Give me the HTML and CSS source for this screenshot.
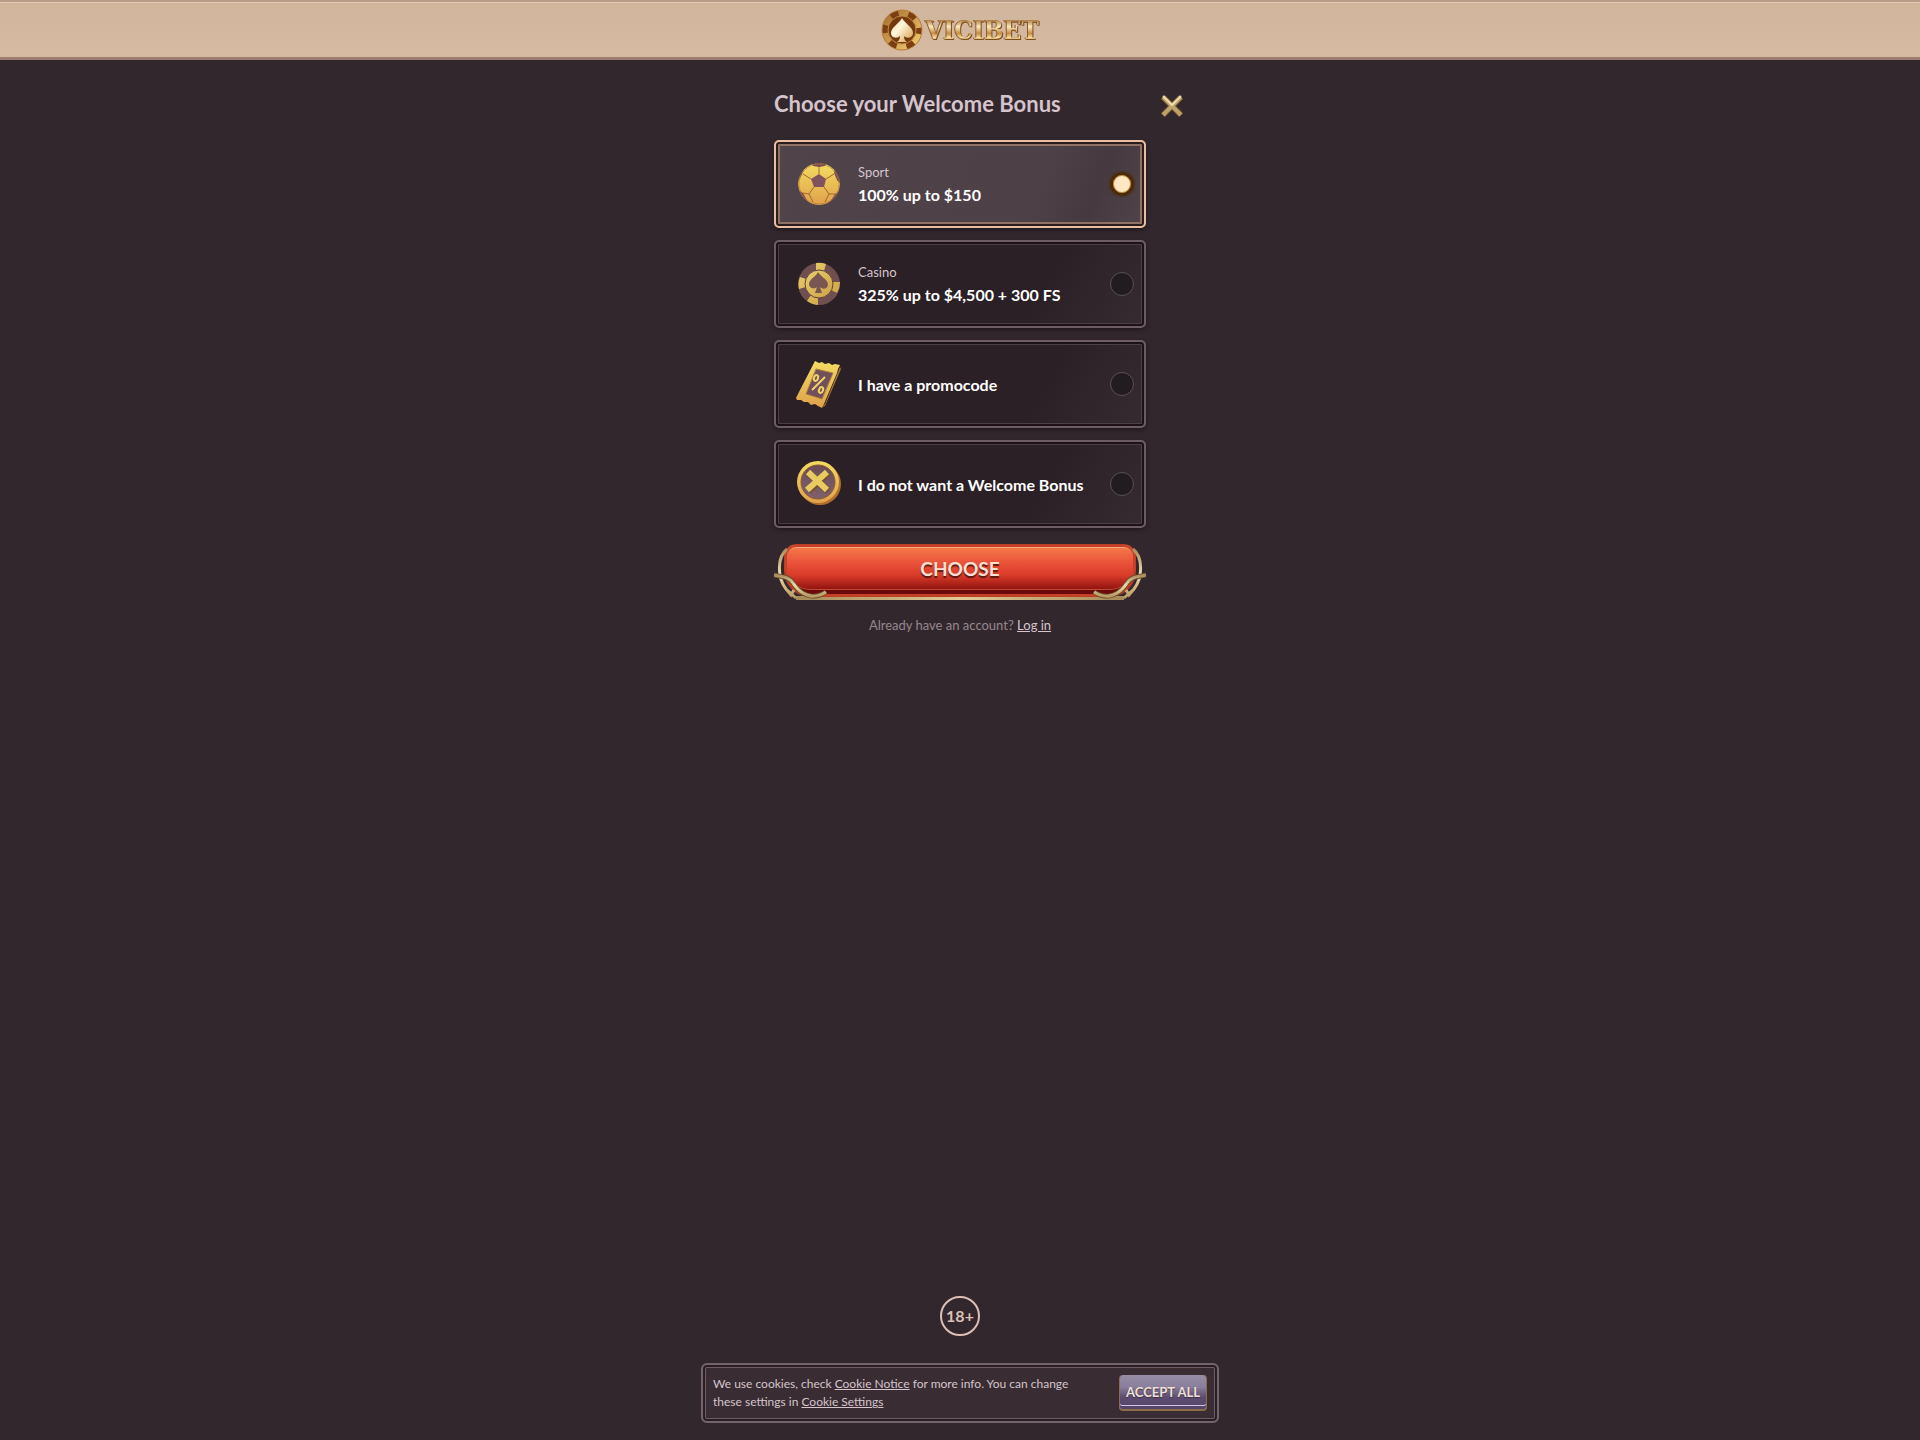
FILE: index.html
```
<!DOCTYPE html>
<html lang="en">

<head>
	<meta charset="utf-8">
	<meta name="viewport" content="width=device-width, initial-scale=1">
	<title>Vicibet - Choose your Welcome Bonus</title>
	<link rel="stylesheet" href="styles.css">
</head>

<body>
	<!-- shared gradients -->
	<svg class="defs" width="0" height="0" aria-hidden="true">
		<defs>
			<linearGradient id="gold" x1="0" y1="0" x2="0" y2="1">
				<stop offset="0" stop-color="#f3dc62" />
				<stop offset="1" stop-color="#e0a04c" />
			</linearGradient>
			<linearGradient id="goldSoft" x1="0" y1="0" x2="1" y2="1">
				<stop offset="0" stop-color="#ead06b" />
				<stop offset="1" stop-color="#caa044" />
			</linearGradient>
			<linearGradient id="plum" x1="0" y1="0" x2="0" y2="1">
				<stop offset="0" stop-color="#6b4c57" />
				<stop offset="1" stop-color="#80606d" />
			</linearGradient>
			<linearGradient id="brass" x1="0" y1="0" x2="0" y2="1">
				<stop offset="0" stop-color="#a78d5e" />
				<stop offset="0.5" stop-color="#ecdcae" />
				<stop offset="1" stop-color="#b99b64" />
			</linearGradient>
			<linearGradient id="rim" x1="0" y1="0" x2="1" y2="1">
				<stop offset="0" stop-color="#a8702f" />
				<stop offset="1" stop-color="#f2cb72" />
			</linearGradient>
			<linearGradient id="cream" x1="0" y1="0" x2="1" y2="1">
				<stop offset="0" stop-color="#f3d9a0" />
				<stop offset="0.4" stop-color="#fff6da" />
				<stop offset="1" stop-color="#d69c4c" />
			</linearGradient>
		</defs>
	</svg>

	<header class="topbar">
		<a class="logo" href="#" aria-label="Vicibet">
			<svg width="42" height="42" viewBox="0 0 42 42" aria-hidden="true">
				<circle cx="21" cy="21" r="20" fill="#7c3f12" />
				<circle cx="21" cy="21" r="17" fill="none" stroke="url(#rim)" stroke-width="6" stroke-dasharray="10 8" stroke-dashoffset="14" />
				<circle cx="21" cy="21" r="20" fill="none" stroke="#b98042" stroke-width="1" />
				<circle cx="21" cy="21" r="14" fill="#75390f" stroke="#c28c44" stroke-width="1" />
				<path d="M21 9c2 5 11 9 11 15 0 5-6 6-9 3 0 3 1 5 3 6H16c2-1 3-3 3-6-3 3-9 2-9-3 0-6 9-10 11-15z" fill="url(#cream)" />
			</svg>
			<span class="logo-text">VICIBET</span>
		</a>
	</header>

	<main class="bonus">
		<div class="bonus-head">
			<h1>Choose your Welcome Bonus</h1>
			<button class="close" type="button" aria-label="Close">
				<svg width="24" height="24" viewBox="0 0 24 24" aria-hidden="true">
					<path d="M3 3L21 21M21 3L3 21" stroke="#6f5530" stroke-width="6" />
					<path d="M3 3L21 21M21 3L3 21" stroke="#bfa267" stroke-width="4" />
					<path d="M3 2L12 11L21 2" fill="none" stroke="#ecdcb0" stroke-width="2" />
				</svg>
			</button>
		</div>

		<form>
			<label class="card">
				<svg class="card-icon" width="44" height="44" viewBox="0 0 44 44" aria-hidden="true">
					<clipPath id="ball"><circle cx="22" cy="22" r="21" /></clipPath>
					<g clip-path="url(#ball)">
						<circle cx="22" cy="22" r="21" fill="url(#gold)" />
						<path d="M22 12l7 5-2 8H17l-3-8z" fill="#80525c" />
						<path d="M14 0h16l-2 4-6 1-6-1zM38 7l6 6v9l-4-4-3-7zM7 7l-7 6v5l5-6zM0 27l6 4 5 9-7 2zM44 28l-6 4-5 8 9 2z" fill="#7d4c52" />
						<path d="M22 12V5M29 17l8-5M27 25l5 7M17 25l-5 7M14 17l-8-5M6 31l6 1 4 8M38 32h-6l-4 8M0 20l5-8M44 22l-4-4" fill="none" stroke="#9b6a2c" stroke-width="1" />
						<circle cx="22" cy="22" r="20" fill="none" stroke="#a9763c" stroke-width="1" opacity="0.6" />
					</g>
				</svg>
				<span class="card-text"><small>Sport</small><b>100% up to $150</b></span>
				<input type="radio" name="bonus" value="sport" checked>
			</label>

			<label class="card">
				<svg class="card-icon" width="44" height="44" viewBox="0 0 44 44" aria-hidden="true">
					<circle cx="22" cy="22" r="21" fill="#714f50" />
					<path d="M19 1A21 21 0 0 1 29 2L27 9H19zM43 20A21 21 0 0 1 40 31L34 28 36 20zM21 43A21 21 0 0 1 10 39L14 33 21 35zM2 27A21 21 0 0 1 3 15L9 17V25z" fill="url(#goldSoft)" />
					<circle cx="22" cy="22" r="14" fill="url(#goldSoft)" stroke="#5e4043" stroke-width="1" />
					<path d="M21 10c3 5 9 7 10 12 0 5-5 6-8 3l2 6h-7l2-6c-3 3-8 1-8-3 0-5 7-7 9-12z" fill="#7a5652" />
				</svg>
				<span class="card-text"><small>Casino</small><b>325% up to $4,500 + 300 FS</b></span>
				<input type="radio" name="bonus" value="casino">
			</label>

			<label class="card">
				<svg class="card-icon" width="46" height="48" viewBox="0 0 46 48" aria-hidden="true">
					<path d="M44 7l-15 37-3 3 3-1 16-37z" fill="#a87430" />
					<path d="M19 1l4 2 3-1 3 2 4-1 3 2 3-1 5 1-2 4-1 4-13 31-2 4-4-2-3-2-4 1-3-3-4 0-3-2-4 0-1-2 4-8z" fill="url(#gold)" />
					<path d="M20 9l17 4-11 26-16-5z" fill="#71505b" stroke="#ad803c" stroke-width="1" />
					<ellipse cx="20" cy="18" rx="2" ry="3" transform="rotate(20 20 18)" fill="none" stroke="#f2d36a" stroke-width="2" />
					<ellipse cx="25" cy="30" rx="2" ry="3" transform="rotate(20 25 30)" fill="none" stroke="#f2d36a" stroke-width="2" />
					<path d="M29 17L16 30" stroke="#f2d36a" stroke-width="2" />
				</svg>
				<span class="card-text"><b>I have a promocode</b></span>
				<input type="radio" name="bonus" value="promocode">
			</label>

			<label class="card">
				<svg class="card-icon" width="46" height="48" viewBox="0 0 46 48" aria-hidden="true">
					<circle cx="24" cy="24" r="21" fill="#b06f2b" />
					<circle cx="22" cy="22" r="21" fill="url(#gold)" />
					<circle cx="22" cy="22" r="17" fill="url(#plum)" stroke="#8a5a2a" stroke-width="1" />
					<path d="M13 13L32 31M32 13L12 31" stroke="#74502a" stroke-width="7" />
					<path d="M12 12L31 30M31 12L11 30" stroke="#e8cc62" stroke-width="6" />
				</svg>
				<span class="card-text"><b>I do not want a Welcome Bonus</b></span>
				<input type="radio" name="bonus" value="none">
			</label>

			<button class="choose" type="submit">
				<svg class="horn" width="56" height="56" viewBox="0 0 56 56" aria-hidden="true">
					<path d="M13 5C3 13 3 33 12 45L22 54M12 45L17 51L20 46" fill="none" stroke="url(#brass)" stroke-width="3" />
					<path d="M0 31C8 33 14 32 19 39C26 50 38 57 52 48" fill="none" stroke="#6d4f2c" stroke-width="5" />
					<path d="M0 31C8 33 14 32 19 39C26 50 38 57 52 48" fill="none" stroke="url(#brass)" stroke-width="3" />
				</svg>
				<span class="choose-label">CHOOSE</span>
				<svg class="horn horn-right" width="56" height="56" viewBox="0 0 56 56" aria-hidden="true">
					<path d="M13 5C3 13 3 33 12 45L22 54M12 45L17 51L20 46" fill="none" stroke="url(#brass)" stroke-width="3" />
					<path d="M0 31C8 33 14 32 19 39C26 50 38 57 52 48" fill="none" stroke="#6d4f2c" stroke-width="5" />
					<path d="M0 31C8 33 14 32 19 39C26 50 38 57 52 48" fill="none" stroke="url(#brass)" stroke-width="3" />
				</svg>
			</button>
		</form>

		<p class="login">Already have an account? <a href="#">Log in</a></p>
	</main>

	<footer class="age"><span>18+</span></footer>

	<aside class="cookies">
		<p>We use cookies, check <a href="#">Cookie Notice</a> for more info. You can change these settings in <a href="#">Cookie Settings</a></p>
		<button class="accept" type="button">ACCEPT ALL</button>
	</aside>
</body>

</html>
```
FILE: styles.css
```
* {
	box-sizing: border-box;
}

:root {
	--bg: #32272d;
	--line: #6d5c64;
	--text: #d5c4cc;
	--gold: #e8bfa4;
}

body {
	font-family: Lato, "Open Sans", sans-serif;
	font-size: 13px;
	line-height: 18px;
	color: var(--text);
	background-color: var(--bg);
	margin: 0;
	min-height: 100vh;
	display: flex;
	flex-direction: column;
}

a {
	color: inherit;
}

.defs {
	position: absolute;
}

.topbar {
	height: 60px;
	display: flex;
	align-items: center;
	justify-content: center;
	background: linear-gradient(#d0b59c, #d6baa2);
	border-top: 2px solid #b89c86;
	border-bottom: 3px solid #9c7f70;
	box-shadow: inset 0 1px 0 #e2cab4;
}

.logo {
	display: flex;
	align-items: center;
	gap: 2px;
	text-decoration: none;
}

.logo-text {
	font: bold 26px/42px "DejaVu Serif Condensed", "DejaVu Serif", serif;
	color: transparent;
	background: linear-gradient(#a8763a 25%, #fbe9bd 42%, #c48d45 58%, #f7dc98 68%, #a06828 78%);
	background-clip: text;
	filter: drop-shadow(1px 1px 0 #7c4c22) drop-shadow(-1px 0 0 #8b5a2b);
}

.bonus {
	width: 372px;
	max-width: 100%;
	margin: 0 auto;
	padding-top: 28px;
	flex: 1;
}

.bonus-head {
	display: flex;
	align-items: center;
	justify-content: space-between;
	margin: 0 -38px 20px 0;
}

h1 {
	font-size: 22px;
	line-height: 32px;
	font-weight: bold;
	margin: 0;
}

.close {
	display: flex;
	padding: 4px 0 0;
	border: none;
	background: none;
	cursor: pointer;
}

form {
	display: flex;
	flex-direction: column;
	gap: 12px;
}

.card {
	height: 88px;
	display: flex;
	align-items: center;
	padding: 0 10px 0 20px;
	border: 2px solid var(--line);
	border-radius: 5px;
	background: linear-gradient(120deg, #2a2025 70%, #352b31);
	box-shadow: inset 0 0 0 2px #1b1117, inset 0 0 0 3px #4c3f45, 0 2px 4px #21181d;
	cursor: pointer;
}

.card:has(:checked) {
	border-color: var(--gold);
	background: linear-gradient(110deg, #51434a, #4d4046 70%, #463940 85%, #51434a);
	box-shadow: inset 0 0 0 2px #2c1c1c, inset 0 0 0 4px #8d7265, 0 2px 4px #21181d;
}

.card-icon {
	flex: 0 0 46px;
}

.card-text {
	flex: 1;
	margin-left: 16px;
	padding-top: 2px;
	display: flex;
	flex-direction: column;
	gap: 2px;
}

.card-text small {
	font-size: 13px;
	line-height: 18px;
}

.card-text b {
	font-size: 16px;
	line-height: 24px;
	color: #fff;
}

.card input {
	appearance: none;
	width: 24px;
	height: 24px;
	margin: 0;
	border: 1px solid #5a4f54;
	border-radius: 50%;
	background-color: #221c20;
}

.card input:checked {
	border: 3px solid #4b2c08;
	background-color: #ffe6c4;
	box-shadow: inset 0 0 0 1px #c98f2c, 0 0 3px #4b2c08;
}

.choose {
	position: relative;
	height: 56px;
	margin-top: 4px;
	padding: 0 10px 3px;
	border: none;
	background: linear-gradient(90deg, #a58a58, #e0ca98, #a58a58) 50% 100% / 328px 4px no-repeat;
	font: bold 19px/24px Lato, "Open Sans", sans-serif;
	color: #fbe0d2;
	cursor: pointer;
}

.choose-label {
	display: flex;
	align-items: center;
	justify-content: center;
	height: 53px;
	padding-bottom: 4px;
	border-radius: 12px 12px 26px 26px;
	background: linear-gradient(#f6804b, #ea523a 35%, #d83a28 60%, #8d1210 88%, #5c0708);
	border: 1px solid #b93f25;
	box-shadow: inset 0 0 0 2px #c9402a, inset 0 3px 0 #f9a878, inset 0 -6px 0 #6a0a0a, inset 0 -7px 0 #c04a32;
	text-shadow: 0 2px 1px #5a1712;
}

.horn {
	position: absolute;
	top: 0;
	left: 0;
}

.horn-right {
	left: auto;
	right: 0;
	transform: scaleX(-1);
}

.login {
	margin: 16px 0 0;
	text-align: center;
	color: #96878e;
}

.login a {
	color: var(--text);
}

.age {
	display: flex;
	justify-content: center;
	padding-bottom: 104px;
}

.age span {
	width: 40px;
	height: 40px;
	border: 2px solid #dcc0b8;
	border-radius: 50%;
	font-size: 16px;
	line-height: 36px;
	font-weight: bold;
	text-align: center;
	color: #dcc0b8;
}

.cookies {
	position: fixed;
	left: 0;
	right: 0;
	bottom: 17px;
	width: 518px;
	max-width: 100%;
	height: 60px;
	margin: 0 auto;
	padding: 0 10px;
	display: flex;
	align-items: center;
	justify-content: space-between;
	border: 2px solid #74646b;
	border-radius: 6px;
	background-color: #392d33;
	box-shadow: inset 0 0 0 2px #2a1e24, inset 0 0 0 3px #6d5c64;
}

.cookies p {
	width: 380px;
	margin: 0;
	font-size: 12px;
}

.accept {
	width: 88px;
	height: 36px;
	padding: 0;
	border: 1px solid #8a6e48;
	border-width: 0 1px 2px;
	border-radius: 4px;
	background: linear-gradient(#978da6, #8a7f9c 35%, #5d4c70 65%, #55456a);
	box-shadow: inset 0 -3px 0 #55456a, inset 0 -4px 0 #d4c8de;
	font: bold 13px/16px Lato, "Open Sans", sans-serif;
	color: #f0e0d4;
	text-shadow: 0 1px 1px #3d2e4a;
	cursor: pointer;
}
```
